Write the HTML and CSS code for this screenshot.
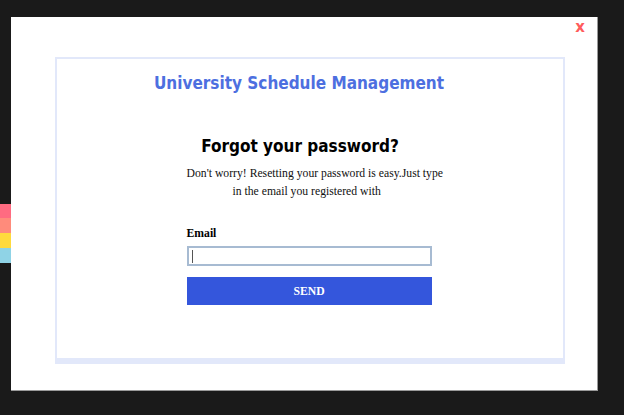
FILE: index.html
```html
<!DOCTYPE html>
<html>
<head>
<meta charset="utf-8">
<link rel="stylesheet" href="styles.css">
</head>
<body>
<div class="swatches">
  <div class="sw sw-pink"></div>
  <div class="sw sw-salmon"></div>
  <div class="sw sw-yellow"></div>
  <div class="sw sw-blue"></div>
</div>
<div class="modal">
  <span class="close">x</span>
  <div class="card">
    <h1 class="brand">University Schedule Management</h1>
    <h2 class="heading">Forgot your password?</h2>
    <p class="intro"><span class="l1">Don't worry! Resetting your password is easy.Just type</span><span class="l2">in the email you registered with</span></p>
    <form class="form">
      <label class="label" for="email">Email</label>
      <div class="input"><span class="caret"></span></div>
      <button class="send" type="button">SEND</button>
    </form>
  </div>
</div>
</body>
</html>
```
FILE: styles.css
```css
html, body { margin: 0; padding: 0; }
body {
  background: #1a1a1a;
  width: 624px;
  height: 415px;
  overflow: hidden;
  font-family: "Liberation Serif", serif;
}
.swatches {
  padding-top: 204px;
  width: 11px;
}
.sw { height: 15px; }
.sw-pink { background: #ff6b81; height: 14px; }
.sw-salmon { background: #ff8b7b; }
.sw-yellow { background: #ffda3d; }
.sw-blue { background: #8fd3e6; }

.modal {
  position: absolute;
  left: 11px;
  top: 17px;
  width: 587px;
  height: 374px;
  background: #fff;
  border-right: 1px solid #9a9a9a;
  border-bottom: 1px solid #9a9a9a;
  padding: 40px 0 0 44px;
  box-sizing: border-box;
}
.close {
  position: absolute;
  right: 12px;
  top: 1px;
  color: #ff5c5c;
  font-family: "DejaVu Sans", sans-serif;
  font-weight: bold;
  font-size: 15px;
}
.card {
  width: 506px;
  height: 299px;
  border: 2px solid #e2e8fa;
  border-bottom-width: 6px;
  display: flex;
  flex-direction: column;
  align-items: center;
}
.brand {
  margin: 14px 22px 0 0;
  font-family: "DejaVu Sans Condensed", "DejaVu Sans", sans-serif;
  font-size: 17px;
  font-weight: bold;
  color: #4d6fe0;
  line-height: 20px;
}
.heading {
  margin: 43px 20px 0 0;
  font-family: "DejaVu Sans Condensed", "DejaVu Sans", sans-serif;
  font-size: 17px;
  font-weight: bold;
  color: #000;
  line-height: 20px;
}
.intro {
  margin: 9px 2px 0 0;
  width: 245px;
  font-size: 11.7px;
  line-height: 17.5px;
  color: #111;
}
.l1 { display: block; white-space: nowrap; }
.l2 { display: block; padding-left: 46px; }
.form {
  width: 245px;
  margin: 26px 2px 0 0;
  display: flex;
  flex-direction: column;
}
.label {
  font-weight: bold;
  font-size: 11.7px;
  line-height: 16px;
  color: #000;
}
.input {
  margin-top: 4px;
  height: 16px;
  border: 2px solid #a7bbd2;
  background: #fff;
  display: flex;
  align-items: center;
  padding-left: 3px;
}
.caret { width: 1px; height: 13px; background: #555; }
.send {
  margin-top: 11px;
  height: 28px;
  border: 0;
  background: #3456dc;
  color: #fff;
  font-family: "Liberation Serif", serif;
  font-weight: bold;
  font-size: 11.7px;
}
```
